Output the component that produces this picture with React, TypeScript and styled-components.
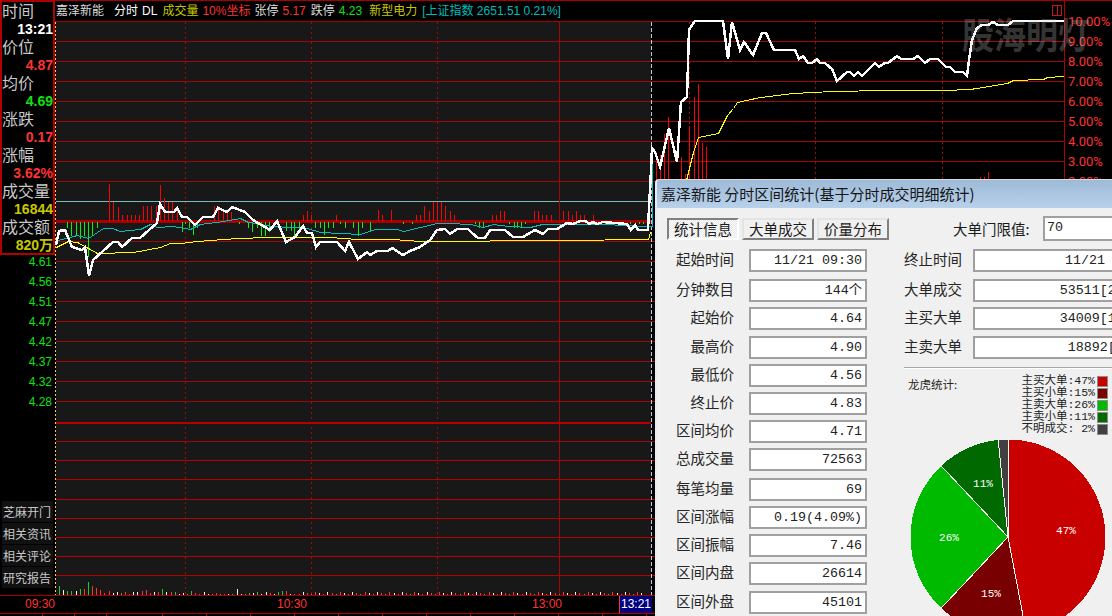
import React from "react";
import styled, { createGlobalStyle } from "styled-components";

const CJK = `"Noto Sans CJK SC", "Liberation Sans", sans-serif`;
const LATIN = `"Liberation Sans", "Noto Sans CJK SC", sans-serif`;
const MONO = `"Liberation Mono", "Noto Sans CJK SC", monospace`;

const Global = createGlobalStyle`
    html, body {
        margin: 0;
        padding: 0;
        background: #000;
    }
    * {
        box-sizing: border-box;
    }
`;

const Screen = styled.div`
    position: relative;
    width: 1112px;
    height: 616px;
    overflow: hidden;
    background: #000;
    border-top: 1px solid #a80000;
    font-family: ${CJK};
`;
const Main = styled.div`
    display: flex;
    height: 594px;
`;

// left rail
const Rail = styled.div`
    display: flex;
    flex-direction: column;
    width: 55px;
    height: 594px;
    padding-bottom: 7px;
`;
const InfoPanel = styled.div`
    height: 254px;
    border: 2px solid #b00000;
    border-top-width: 1px;
`;
const InfoLabel = styled.div`
    height: 18px;
    line-height: 16px;
    font-size: 16px;
    color: #c8c8c8;
    white-space: nowrap;
`;
const InfoValue = styled.div<{ $color: string }>`
    height: 18px;
    line-height: 18px;
    font-family: ${LATIN};
    font-weight: bold;
    font-size: 14px;
    text-align: right;
    color: ${(p) => p.$color};
    white-space: nowrap;
`;
const PriceList = styled.div`
    margin-top: -3px;
    padding-right: 3px;
`;
const PriceTick = styled.div`
    height: 20px;
    line-height: 20px;
    font-family: ${LATIN};
    font-size: 12px;
    text-align: right;
    color: #10e010;
`;
const Menu = styled.div`
    margin-top: auto;
    display: flex;
    flex-direction: column;
    gap: 1px;
    padding-left: 2px;
`;
const MenuItem = styled.div`
    width: 51px;
    height: 21px;
    line-height: 21px;
    background: #111;
    padding-left: 1px;
    font-size: 12px;
    color: #c8c8c8;
    white-space: nowrap;
`;

// centre
const ChartColumn = styled.div`
    width: 1009px;
    display: flex;
    flex-direction: column;
`;
const Header = styled.div`
    display: flex;
    align-items: center;
    height: 21px;
    flex-shrink: 0;
    padding-left: 1px;
    border-bottom: 1px solid #a80000;
    font-size: 12px;
    white-space: nowrap;
`;
const HeaderItem = styled.span<{ $color: string; $left: number }>`
    flex-shrink: 0;
    margin-left: ${(p) => p.$left}px;
    color: ${(p) => p.$color};
    font-family: ${LATIN};
    line-height: 20px;
`;
const ChartSvg = styled.svg`
    display: block;
    overflow: visible;
`;
const RightAxis = styled.div`
    width: 48px;
    height: 594px;
    border-left: 1px solid #b00000;
    padding: 11px 0 0 3px;
`;
const AxisTick = styled.div`
    height: 20px;
    line-height: 20px;
    font-family: "Roboto", ${LATIN};
    font-size: 13px;
    color: #ff3232;
    white-space: nowrap;
`;
const Watermark = styled.div`
    position: absolute;
    left: 962px;
    top: 11px;
    font-size: 32px;
    font-weight: bold;
    line-height: 42px;
    color: rgba(210, 210, 210, 0.27);
    white-space: nowrap;
    transform: scaleY(1.15);
`;

// time axis
const TimeAxis = styled.div`
    display: flex;
    height: 19px;
    border-top: 1px solid #a80000;
    border-bottom: 1px solid #b00000;
    font-family: ${LATIN};
    font-size: 12px;
    line-height: 17px;
    color: #ff3232;
`;
const TimeLabel = styled.div<{ $width: number }>`
    width: ${(p) => p.$width}px;
    text-align: right;
`;
const TimeCursor = styled.div`
    margin-left: 57px;
    width: 33px;
    background: #000080;
    border-left: 1px solid #ff3232;
    text-align: center;
    color: #fff;
`;
const TickRow = styled.div`
    display: flex;
    height: 2px;
`;
const Tick = styled.div<{ $width: number }>`
    flex-shrink: 0;
    width: ${(p) => p.$width}px;
    border-right: 1px solid #b00000;
`;

// dialog
const Dialog = styled.div`
    position: absolute;
    left: 655px;
    top: 178px;
    width: 520px;
    height: 470px;
    background: #f0f0f0;
    border-top: 1px solid #d8d8d8;
    border-left: 2px solid #e8eef6;
    border-top-left-radius: 4px;
    overflow: hidden;
`;
const TitleBar = styled.div`
    height: 28px;
    line-height: 28px;
    padding-left: 4px;
    background: linear-gradient(#9dbad7, #b8d1eb);
    font-size: 15px;
    color: #151515;
    white-space: nowrap;
`;
const TabBar = styled.div`
    display: flex;
    align-items: center;
    height: 25px;
    margin-top: 8px;
    padding-left: 10px;
`;
const Tab = styled.div<{ $active?: boolean }>`
    flex-shrink: 0;
    width: 72px;
    height: 22px;
    margin-right: 3px;
    margin-top: 1px;
    line-height: 18px;
    text-align: center;
    font-size: 14.5px;
    color: #1a1a1a;
    border: 2px solid;
    border-color: ${(p) => (p.$active ? "#808080 #fff #fff #808080" : "#e4e4e4 #808080 #808080 #e4e4e4")};
    background: ${(p) => (p.$active ? "repeating-conic-gradient(#fff 0 25%, #e6e6e6 0 50%) 0 0 / 2px 2px" : "#f0f0f0")};
`;
const ThresholdLabel = styled.div`
    flex-shrink: 0;
    margin-left: 61px;
    width: 90px;
    font-size: 14.5px;
    color: #1a1a1a;
    white-space: nowrap;
`;
const ThresholdInput = styled.div`
    flex-shrink: 0;
    width: 200px;
    height: 25px;
    line-height: 20px;
    padding-left: 2px;
    background: #fff;
    border: 2px solid #a0a0a0;
    font-family: ${MONO};
    font-size: 13.33px;
    color: #222;
`;
const Form = styled.div`
    display: flex;
    margin-top: 1px;
    padding-left: 10px;
`;
const Column = styled.div<{ $left?: number }>`
    display: flex;
    flex-direction: column;
    margin-left: ${(p) => p.$left ?? 0}px;
`;
const Field = styled.div<{ $gap: number; $labelWidth: number; $space: number }>`
    display: flex;
    align-items: center;
    height: 23px;
    margin-top: ${(p) => p.$gap}px;
    & > label {
        width: ${(p) => p.$labelWidth}px;
        margin-right: ${(p) => p.$space}px;
        padding-bottom: 5px;
        text-align: right;
        font-size: 14.5px;
        color: #262626;
        white-space: nowrap;
    }
`;
const Value = styled.div<{ $width: number }>`
    flex-shrink: 0;
    width: ${(p) => p.$width}px;
    height: 23px;
    line-height: 20px;
    padding-right: 3px;
    text-align: right;
    background: #fff;
    border: 2px solid #a0a0a0;
    font-family: ${MONO};
    font-size: 13.33px;
    color: #222;
    white-space: nowrap;
`;
const Divider = styled.div`
    margin-top: 8px;
    height: 2px;
    width: 254px;
    background: #a8a8a8;
    border-bottom: 1px solid #fff;
`;
const StatBlock = styled.div`
    display: flex;
    justify-content: space-between;
    width: 204px;
    padding: 6px 0 0 4px;
`;
const StatTitle = styled.div`
    font-size: 11.5px;
    line-height: 16px;
    margin-top: 1px;
    color: #262626;
`;
const Legend = styled.div`
    display: flex;
    flex-direction: column;
`;
const LegendRow = styled.div`
    display: flex;
    align-items: center;
    justify-content: flex-end;
    gap: 2px;
    height: 12px;
    font-family: ${MONO};
    font-size: 11.5px;
    line-height: 12px;
    color: #222;
    white-space: pre;
`;
const Swatch = styled.span<{ $color: string }>`
    width: 11px;
    height: 11px;
    background: ${(p) => p.$color};
    border: 1px solid #8c8c8c;
`;
const PieBox = styled.svg`
    display: block;
    margin: 3px 0 0 5px;
`;

const GRID = [41, 61, 81, 101, 121, 141, 161, 181, 241, 261, 281, 301, 321, 341, 361, 381, 401, 441];
const GRID_BRIGHT = [460, 479, 499, 518, 537, 556, 575];

const toPoints = (list: number[][]) => list.map((p) => p.join(",")).join(" ");

const PRICE = [
    [56, 245], [59, 231], [65, 230], [72, 247], [82, 250], [85, 247], [89, 276], [93, 260], [113, 242], [118, 242],
    [122, 247], [132, 238], [140, 238], [157, 223], [160, 204], [165, 212], [174, 212], [177, 208], [182, 217],
    [187, 217], [195, 225], [203, 217], [213, 217], [218, 208], [227, 212], [232, 207], [245, 212], [253, 220],
    [270, 230], [277, 221], [286, 242], [295, 237], [303, 226], [307, 233], [312, 233], [316, 247], [320, 242],
    [337, 242], [345, 251], [349, 242], [358, 259], [367, 252], [370, 255], [377, 251], [388, 251], [392, 248],
    [403, 255], [410, 251], [420, 247], [430, 240], [437, 230], [445, 229], [450, 234], [457, 229], [468, 229],
    [472, 233], [478, 238], [485, 238], [490, 230], [505, 230], [513, 237], [523, 237], [535, 230], [543, 234],
    [548, 229], [557, 229], [567, 223], [573, 224], [580, 221], [585, 221], [590, 224], [593, 222], [597, 224],
    [603, 222], [627, 224], [631, 230], [635, 225], [638, 230], [648, 230], [649, 208], [651, 170], [652, 148],
    [655, 152], [660, 167], [669, 128], [677, 162], [681, 102], [687, 97], [689, 30], [695, 21], [723, 21],
    [728, 59], [732, 22], [740, 50], [744, 42], [753, 55], [762, 33], [766, 33], [774, 50], [795, 50], [799, 59],
    [803, 56], [808, 63], [812, 63], [817, 59], [820, 63], [825, 63], [832, 69], [837, 81], [847, 72], [850, 72],
    [854, 76], [858, 72], [862, 76], [875, 63], [879, 67], [885, 63], [888, 63], [897, 56], [901, 59], [913, 59],
    [918, 56], [925, 63], [930, 59], [938, 59], [946, 67], [950, 67], [955, 72], [963, 72], [967, 76], [969, 60],
    [972, 40], [977, 28], [982, 25], [988, 25], [993, 22], [998, 25], [1008, 25], [1013, 21], [1064, 21],
];
const AVERAGE_LEFT = [
    [56, 247], [68, 241], [77, 242], [88, 248], [97, 253], [133, 252], [160, 247], [170, 243], [180, 243], [197, 241],
    [210, 240], [238, 238], [267, 237], [330, 237], [357, 239], [393, 239], [420, 241], [562, 240], [648, 239], [650, 232],
];
const AVERAGE_RIGHT = [
    [686, 180], [693, 152], [698, 137], [718, 133], [727, 115], [733, 108], [737, 102], [760, 97], [793, 93], [832, 91],
    [885, 90], [943, 90], [970, 89], [1007, 83], [1013, 80], [1043, 79], [1047, 77], [1063, 76],
];
const INDEX = [
    [58, 240], [77, 235], [88, 238], [103, 228], [112, 228], [120, 231], [140, 229], [150, 224], [157, 227], [173, 226],
    [190, 229], [200, 224], [223, 221], [240, 218], [248, 222], [273, 226], [307, 228], [320, 232], [360, 234], [375, 229],
    [397, 229], [403, 231], [420, 227], [437, 223], [448, 223], [470, 224], [483, 227], [493, 224], [508, 226], [530, 227],
    [542, 224], [603, 224], [647, 226], [652, 226], [652, 150],
];
const UP: number[][] = [
    [109, 184], [113, 202], [118, 207], [122, 215], [127, 215], [131, 215], [135, 215], [139, 215], [143, 206], [147, 206],
    [151, 206], [156, 206], [160, 185], [164, 198], [168, 202], [172, 202], [177, 206], [214, 206], [218, 206], [223, 212],
    [227, 212], [231, 212], [303, 215], [307, 211], [311, 215], [336, 215], [378, 210], [382, 215], [391, 210], [416, 215],
    [420, 215], [424, 206], [429, 211], [433, 202], [437, 202], [441, 202], [445, 206], [450, 211], [454, 215], [492, 215],
    [496, 215], [500, 211], [504, 211], [534, 211], [538, 211], [542, 215], [546, 215], [551, 215], [563, 211], [568, 211],
    [572, 215], [576, 211], [580, 215], [584, 215], [593, 215],
];
const DOWN: number[][] = [
    [67, 228], [71, 236], [76, 236], [80, 239], [84, 236], [88, 257], [92, 236], [97, 228], [182, 232], [185, 224], [189, 228],
    [193, 235], [197, 228], [239, 224], [248, 228], [252, 232], [257, 228], [261, 236], [265, 236], [269, 232], [286, 231],
    [291, 231], [294, 236], [299, 231], [315, 228], [320, 228], [324, 235], [328, 228], [333, 228], [340, 224], [345, 228],
    [353, 228], [358, 236], [362, 228], [370, 232], [403, 224], [412, 224], [475, 224], [479, 228], [483, 228], [509, 224],
    [514, 228], [517, 228], [521, 228], [525, 224], [588, 224], [598, 224], [605, 224], [614, 224], [622, 224], [630, 224],
    [639, 224], [643, 224], [647, 224],
];
const SPIKES = [
    [656, 152], [660, 155], [664, 134], [668, 117], [681, 157], [685, 174], [689, 126], [694, 97], [698, 84], [702, 143], [706, 147],
    [980, 177], [984, 177], [988, 172],
];

const VOLUME_COLORS = { g: "#10d030", w: "#f0f0f0", r: "#ff3232" };
const VOLUME_HEAD: [keyof typeof VOLUME_COLORS, number][] = [
    ["g", 9], ["w", 5], ["g", 4], ["g", 4], ["w", 4], ["g", 6], ["r", 6], ["g", 13], ["r", 9], ["r", 7], ["r", 5], ["r", 2],
    ["r", 4], ["w", 2], ["w", 3], ["g", 2], ["r", 3], ["r", 1], ["w", 3], ["w", 3], ["r", 4], ["r", 5], ["r", 2], ["w", 3],
    ["r", 3], ["g", 6], ["w", 3], ["r", 3], ["g", 3], ["w", 1], ["w", 2], ["g", 1], ["g", 4], ["r", 2], ["r", 1], ["w", 3],
    ["w", 1], ["r", 1], ["r", 2], ["g", 1], ["r", 1], ["w", 1], ["g", 1], ["w", 6], ["w", 1], ["g", 1], ["g", 2], ["w", 2],
    ["g", 3], ["w", 1], ["w", 3], ["r", 2], ["w", 1], ["g", 3], ["g", 4], ["r", 4], ["w", 1], ["r", 1],
];
// the far part of the bottom strip is only a row of low bars
const VOLUME = [...VOLUME_HEAD, ...Array.from({ length: 84 }, (_, i) => {
    const kind = (["r", "w", "r", "g", "r", "w"] as const)[i % 6];
    return [kind, 1 + ((i * 5) % 3)] as [keyof typeof VOLUME_COLORS, number];
})];

const Chart = () => (
    <ChartSvg width="1009" height="573" viewBox="55 22 1009 573">
        <rect x="56" y="22" width="595" height="573" fill="#181818" />
        <g shapeRendering="crispEdges">
            {GRID.map((y) => (
                <line key={y} x1="56" x2="1064" y1={y + 0.5} y2={y + 0.5} stroke="#a00808" />
            ))}
            {GRID_BRIGHT.map((y) => (
                <line key={y} x1="56" x2="1064" y1={y + 0.5} y2={y + 0.5} stroke="#b80000" />
            ))}
            <line x1="56" x2="651" y1="423" y2="423" stroke="#b80000" strokeWidth="2" />
            <line x1="56" x2="651" y1="201.5" y2="201.5" stroke="#78bcb8" />
            <line x1="56" x2="651" y1="221.5" y2="221.5" stroke="#a80000" strokeWidth="3" />
            {[185, 311, 437, 689, 815, 942].map((x) => (
                <line key={x} x1={x + 0.5} x2={x + 0.5} y1="22" y2="595" stroke="#a00c0c" strokeDasharray="2 3" />
            ))}
            <line x1="559.5" x2="559.5" y1="22" y2="595" stroke="#a00808" />
            <line x1="55.5" x2="55.5" y1="22" y2="595" stroke="#ffc864" strokeDasharray="2 2" />
            <line x1="651.5" x2="651.5" y1="22" y2="595" stroke="#c0c8d8" strokeDasharray="4 2" />
            {UP.map(([x, top]) => (
                <line key={x} x1={x + 0.5} x2={x + 0.5} y1={top} y2="221" stroke="#ff0000" />
            ))}
            {SPIKES.map(([x, top]) => (
                <line key={x} x1={x + 0.5} x2={x + 0.5} y1={top} y2="180" stroke="#ff0000" />
            ))}
            {DOWN.map(([x, bottom]) => (
                <line key={x} x1={x + 0.5} x2={x + 0.5} y1="222" y2={bottom} stroke="#10ee10" />
            ))}
            {VOLUME.map(([kind, h], i) => {
                const x = Math.round(59 + i * 4.13) + 0.5;
                return <line key={i} x1={x} x2={x} y1={595 - (h as number)} y2="595" stroke={VOLUME_COLORS[kind]} />;
            })}
            <g transform="translate(0.5 0.5)">
                <polyline points={toPoints(AVERAGE_LEFT)} fill="none" stroke="#ffff00" strokeWidth="1" />
                <polyline points={toPoints(AVERAGE_RIGHT)} fill="none" stroke="#ffff00" strokeWidth="1" />
                <polyline points={toPoints(INDEX)} fill="none" stroke="#00bcbc" strokeWidth="1" />
            </g>
            <polyline points={toPoints(PRICE)} fill="none" stroke="#ffffff" strokeWidth="2.5" />
            <rect x="1052.5" y="5.5" width="5" height="10" fill="none" stroke="#c81414" />
            <rect x="1057.5" y="5.5" width="4" height="10" fill="none" stroke="#c81414" />
        </g>
    </ChartSvg>
);

const SLICES = [
    { from: 0, to: 47, color: "#c80000" },
    { from: 47, to: 62, color: "#780000" },
    { from: 62, to: 88, color: "#00ba00" },
    { from: 88, to: 98.4, color: "#006a00" },
    { from: 98.4, to: 100, color: "#404040" },
];
const PIE_LABELS = [
    { x: 157, y: 96, text: "47%" },
    { x: 40, y: 103, text: "26%" },
    { x: 82, y: 159, text: "15%" },
    { x: 74, y: 49, text: "11%" },
];

const polar = (percent: number, r: number) => {
    const a = (percent / 100) * Math.PI * 2;
    return [99 + Math.sin(a) * r, 99 - Math.cos(a) * r];
};

const Pie = () => (
    <PieBox width="198" height="198" viewBox="0 0 198 198">
        <g shapeRendering="crispEdges" stroke="#fff" strokeWidth="1">
            {SLICES.map((s) => {
                const [x1, y1] = polar(s.from, 97.5);
                const [x2, y2] = polar(s.to, 97.5);
                return (
                    <path
                        key={s.color}
                        fill={s.color}
                        stroke="none"
                        d={`M99 99 L${x1} ${y1} A97.5 97.5 0 ${s.to - s.from > 50 ? 1 : 0} 1 ${x2} ${y2} Z`}
                    />
                );
            })}
            {SLICES.map((s) => {
                const [x, y] = polar(s.from, 97.5);
                return <line key={s.from} x1="99" y1="99" x2={x} y2={y} />;
            })}
        </g>
        {PIE_LABELS.map((l) => (
            <text key={l.text} x={l.x} y={l.y} fill="#fff" fontFamily="Liberation Mono, monospace" fontSize="11" textAnchor="middle">
                {l.text}
            </text>
        ))}
    </PieBox>
);

const INFO: { label: string; value: string; color: string }[] = [
    { label: "时间", value: "13:21", color: "#ffffff" },
    { label: "价位", value: "4.87", color: "#ff3232" },
    { label: "均价", value: "4.69", color: "#10e010" },
    { label: "涨跌", value: "0.17", color: "#ff3232" },
    { label: "涨幅", value: "3.62%", color: "#ff3232" },
    { label: "成交量", value: "16844", color: "#c8c800" },
    { label: "成交额", value: "820万", color: "#c8c800" },
];
const PRICES = ["4.61", "4.56", "4.51", "4.47", "4.42", "4.37", "4.32", "4.28"];
const MENU = ["芝麻开门", "相关资讯", "相关评论", "研究报告"];
const PERCENTS = ["10.00%", "9.00%", "8.00%", "7.00%", "6.00%", "5.00%", "4.00%", "3.00%", "2.00%"];
const HEADER = [
    { text: "嘉泽新能", color: "#dcdcdc", left: 0 },
    { text: "分时", color: "#ffffff", left: 10 },
    { text: "DL", color: "#ffffff", left: 4 },
    { text: "成交量", color: "#c8c800", left: 5 },
    { text: "10%坐标", color: "#ff3232", left: 4 },
    { text: "张停", color: "#dcdcdc", left: 4 },
    { text: "5.17", color: "#ff3232", left: 4 },
    { text: "跌停", color: "#dcdcdc", left: 5 },
    { text: "4.23", color: "#10e010", left: 4 },
    { text: "新型电力", color: "#c8c800", left: 7 },
    { text: "[上证指数 2651.51 0.21%]", color: "#00bcbc", left: 5 },
];
const TICKS = [43, 32, 32, 56, 44, 44, 44, 44, 44, 44, 44, 44, 44, 44, 44, 44, 44, 44, 44, 44, 44, 44, 44, 44];

const LEFT_FIELDS = [
    { label: "起始时间", value: "11/21 09:30", gap: 7 },
    { label: "分钟数目", value: "144个", gap: 7 },
    { label: "起始价", value: "4.64", gap: 5 },
    { label: "最高价", value: "4.90", gap: 6 },
    { label: "最低价", value: "4.56", gap: 5 },
    { label: "终止价", value: "4.83", gap: 5 },
    { label: "区间均价", value: "4.71", gap: 5 },
    { label: "总成交量", value: "72563", gap: 5 },
    { label: "每笔均量", value: "69", gap: 7 },
    { label: "区间涨幅", value: "0.19(4.09%)", gap: 5 },
    { label: "区间振幅", value: "7.46", gap: 5 },
    { label: "区间内盘", value: "26614", gap: 5 },
    { label: "区间外盘", value: "45101", gap: 6 },
];
const RIGHT_FIELDS = [
    { label: "终止时间", value: "11/21 13:21", gap: 7 },
    { label: "大单成交", value: "53511[296笔]", gap: 7 },
    { label: "主买大单", value: "34009[188笔]", gap: 5 },
    { label: "主卖大单", value: "18892[96笔]", gap: 6 },
];
const LEGEND = [
    { text: "主买大单:47%", color: "#c80000" },
    { text: "主买小单:15%", color: "#780000" },
    { text: "主卖大单:26%", color: "#00ba00" },
    { text: "主卖小单:11%", color: "#006a00" },
    { text: "不明成交: 2%", color: "#404040" },
];

const App = () => {
    return (
        <Screen>
            <Global />
            <Main>
                <Rail>
                    <InfoPanel>
                        {INFO.map((row) => (
                            <React.Fragment key={row.label}>
                                <InfoLabel>{row.label}</InfoLabel>
                                <InfoValue $color={row.color}>{row.value}</InfoValue>
                            </React.Fragment>
                        ))}
                    </InfoPanel>
                    <PriceList>
                        {PRICES.map((p) => (
                            <PriceTick key={p}>{p}</PriceTick>
                        ))}
                    </PriceList>
                    <Menu>
                        {MENU.map((m) => (
                            <MenuItem key={m}>{m}</MenuItem>
                        ))}
                    </Menu>
                </Rail>
                <ChartColumn>
                    <Header>
                        {HEADER.map((h) => (
                            <HeaderItem key={h.text} $color={h.color} $left={h.left}>
                                {h.text}
                            </HeaderItem>
                        ))}
                    </Header>
                    <Chart />
                </ChartColumn>
                <RightAxis>
                    {PERCENTS.map((p) => (
                        <AxisTick key={p}>{p}</AxisTick>
                    ))}
                </RightAxis>
            </Main>
            <TimeAxis>
                <TimeLabel $width={55}>09:30</TimeLabel>
                <TimeLabel $width={252}>10:30</TimeLabel>
                <TimeLabel $width={255}>13:00</TimeLabel>
                <TimeCursor>13:21</TimeCursor>
            </TimeAxis>
            <TickRow>
                {TICKS.map((w, i) => (
                    <Tick key={i} $width={w} />
                ))}
            </TickRow>
            <Watermark>股海明灯</Watermark>
            <Dialog>
                <TitleBar>嘉泽新能 分时区间统计(基于分时成交明细统计)</TitleBar>
                <TabBar>
                    <Tab $active>统计信息</Tab>
                    <Tab>大单成交</Tab>
                    <Tab>价量分布</Tab>
                    <ThresholdLabel>大单门限值:</ThresholdLabel>
                    <ThresholdInput>70</ThresholdInput>
                </TabBar>
                <Form>
                    <Column>
                        {LEFT_FIELDS.map((f) => (
                            <Field key={f.label} $gap={f.gap} $labelWidth={67} $space={15}>
                                <label>{f.label}</label>
                                <Value $width={118}>{f.value}</Value>
                            </Field>
                        ))}
                    </Column>
                    <Column $left={37}>
                        {RIGHT_FIELDS.map((f) => (
                            <Field key={f.label} $gap={f.gap} $labelWidth={58} $space={11}>
                                <label>{f.label}</label>
                                <Value $width={185}>{f.value}</Value>
                            </Field>
                        ))}
                        <Divider />
                        <StatBlock>
                            <StatTitle>龙虎统计:</StatTitle>
                            <Legend>
                                {LEGEND.map((l) => (
                                    <LegendRow key={l.text}>
                                        {l.text}
                                        <Swatch $color={l.color} />
                                    </LegendRow>
                                ))}
                            </Legend>
                        </StatBlock>
                        <Pie />
                    </Column>
                </Form>
            </Dialog>
        </Screen>
    );
};

export default App;
